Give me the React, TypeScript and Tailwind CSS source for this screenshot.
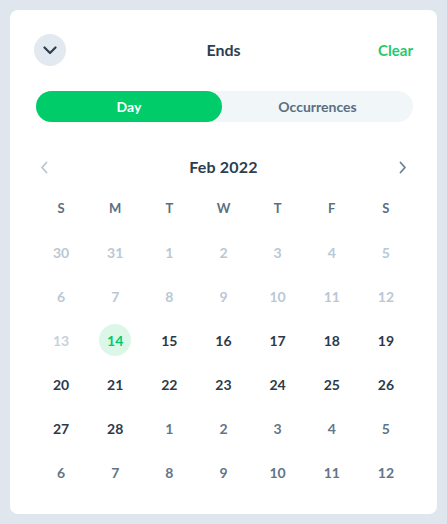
import React from "react";

type Day = { n: number; kind: "past" | "past2" | "cur" | "next" | "sel" };

const rows: Day[][] = [
  [30, 31, 1, 2, 3, 4, 5].map((n) => ({ n, kind: "past" as const })),
  [6, 7, 8, 9, 10, 11, 12].map((n) => ({ n, kind: "past" as const })),
  [
    { n: 13, kind: "past2" },
    { n: 14, kind: "sel" },
    ...[15, 16, 17, 18, 19].map((n) => ({ n, kind: "cur" as const })),
  ],
  [20, 21, 22, 23, 24, 25, 26].map((n) => ({ n, kind: "cur" as const })),
  [
    { n: 27, kind: "cur" },
    { n: 28, kind: "cur" },
    ...[1, 2, 3, 4, 5].map((n) => ({ n, kind: "next" as const })),
  ],
  [6, 7, 8, 9, 10, 11, 12].map((n) => ({ n, kind: "next" as const })),
];

const cls: Record<Day["kind"], string> = {
  past: "text-[#b9c8d5]",
  past2: "text-[#c9d1da]",
  cur: "text-[#2b3a4b]",
  next: "text-[#627588]",
  sel: "text-[#00c96b] bg-[#dcf7e8] rounded-full",
};

export default function App() {
  return (
    <div
      className="w-[447px] h-[524px] bg-[#dfe6ee] p-[10px]"
      style={{ fontFamily: "Lato, 'Open Sans', sans-serif" }}
    >
      <div className="w-full h-full bg-white rounded-[8px] px-[24px] pt-[24px]">
        <div className="flex items-center justify-between h-[32px]">
          <div className="w-[32px] h-[32px] rounded-full bg-[#e3e9f0] flex items-center justify-center">
            <svg width="14" height="9" viewBox="0 0 14 9" fill="none">
              <path d="M1.5 1.5 L7 7 L12.5 1.5" stroke="#2d3e50" strokeWidth="2.2" strokeLinecap="round" strokeLinejoin="round" />
            </svg>
          </div>
          <div className="text-[16px] font-bold text-[#2d3e50] translate-x-[3px]">Ends</div>
          <div className="text-[15px] font-bold text-[#1fcb6e] w-[38px] text-right">Clear</div>
        </div>

        <div className="mt-[25px] ml-[2px] h-[31px] rounded-full bg-[#f1f6f9] flex">
          <div className="w-[186px] h-full rounded-full bg-[#00cc6a] flex items-center justify-center text-white text-[14px] font-bold">
            Day
          </div>
          <div className="flex-1 flex items-center justify-center text-[#5b6e80] text-[14px] font-bold">
            Occurrences
          </div>
        </div>

        <div className="mt-[33px] flex items-center justify-between h-[24px] px-[6px]">
          <svg width="9" height="13" viewBox="0 0 9 13" fill="none">
            <path d="M6.5 1.5 L2 6.5 L6.5 11.5" stroke="#b6c6d3" strokeWidth="1.8" strokeLinecap="round" strokeLinejoin="round" />
          </svg>
          <div className="text-[16px] font-bold text-[#2d3e50] tracking-[0.2px]">Feb 2022</div>
          <svg width="9" height="13" viewBox="0 0 9 13" fill="none">
            <path d="M2.5 1.5 L7 6.5 L2.5 11.5" stroke="#6d8194" strokeWidth="1.8" strokeLinecap="round" strokeLinejoin="round" />
          </svg>
        </div>

        <div className="mt-[18px] grid grid-cols-7">
          {["S", "M", "T", "W", "T", "F", "S"].map((d, i) => (
            <div key={i} className="h-[24px] flex items-center justify-center text-[13px] font-bold text-[#5b6f82]">
              {d}
            </div>
          ))}
        </div>

        <div className="mt-[15px] flex flex-col gap-[12px]">
          {rows.map((r, ri) => (
            <div key={ri} className="grid grid-cols-7">
              {r.map((d, di) => (
                <div key={di} className="flex items-center justify-center">
                  <div
                    className={`w-[32px] h-[32px] flex items-center justify-center text-[14px] font-bold ${cls[d.kind]}`}
                  >
                    {d.n}
                  </div>
                </div>
              ))}
            </div>
          ))}
        </div>
      </div>
    </div>
  );
}
